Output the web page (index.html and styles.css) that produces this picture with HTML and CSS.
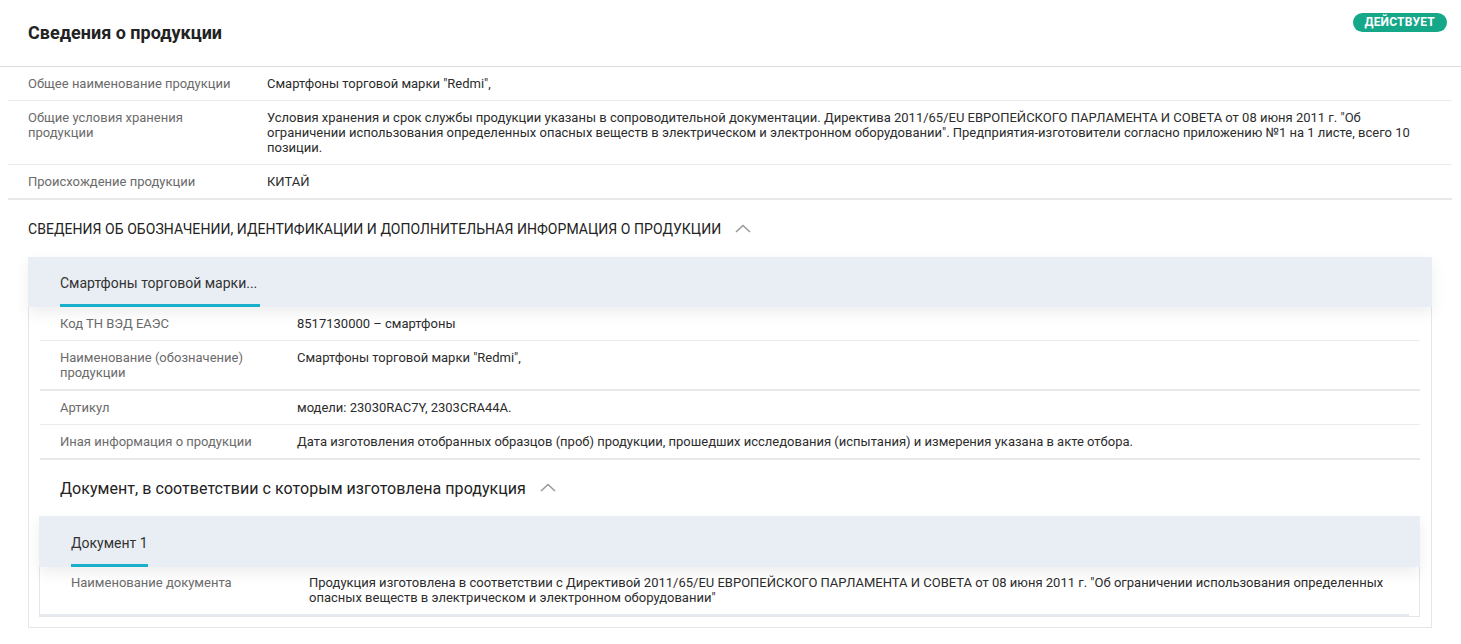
FILE: index.html
```html
<!DOCTYPE html>
<html lang="ru">
<head>
<meta charset="utf-8">
<title>Сведения о продукции</title>
<link rel="stylesheet" href="styles.css">
</head>
<body>
<div class="page">
  <header class="head">
    <h1 class="title">Сведения о продукции</h1>
    <span class="badge">ДЕЙСТВУЕТ</span>
  </header>

  <div class="rows">
    <div class="row">
      <div class="label">Общее наименование продукции</div>
      <div class="value">Смартфоны торговой марки "Redmi",</div>
    </div>
    <div class="row">
      <div class="label">Общие условия хранения продукции</div>
      <div class="value">Условия хранения и срок службы продукции указаны в сопроводительной документации. Директива 2011/65/EU ЕВРОПЕЙСКОГО ПАРЛАМЕНТА И СОВЕТА от 08 июня 2011 г. "Об ограничении использования определенных опасных веществ в электрическом и электронном оборудовании". Предприятия-изготовители согласно приложению №1 на 1 листе, всего 10 позиции.</div>
    </div>
    <div class="row row-last">
      <div class="label">Происхождение продукции</div>
      <div class="value">КИТАЙ</div>
    </div>
  </div>

  <div class="section-head">
    <span>СВЕДЕНИЯ ОБ ОБОЗНАЧЕНИИ, ИДЕНТИФИКАЦИИ И ДОПОЛНИТЕЛЬНАЯ ИНФОРМАЦИЯ О ПРОДУКЦИИ</span>
    <svg class="chev" width="16" height="9" viewBox="0 0 16 9"><polyline points="1,8 8,1.5 15,8" fill="none" stroke="#9a9a9a" stroke-width="1.6"/></svg>
  </div>

  <div class="card">
    <div class="tabs">
      <div class="tab">Смартфоны торговой марки...</div>
    </div>
    <div class="card-body">
      <div class="irow">
        <div class="label">Код ТН ВЭД ЕАЭС</div>
        <div class="value">8517130000 – смартфоны</div>
      </div>
      <div class="irow irow-thick">
        <div class="label">Наименование (обозначение) продукции</div>
        <div class="value">Смартфоны торговой марки "Redmi",</div>
      </div>
      <div class="irow">
        <div class="label">Артикул</div>
        <div class="value">модели: 23030RAC7Y, 2303CRA44A.</div>
      </div>
      <div class="irow irow-thick">
        <div class="label">Иная информация о продукции</div>
        <div class="value">Дата изготовления отобранных образцов (проб) продукции, прошедших исследования (испытания) и измерения указана в акте отбора.</div>
      </div>

      <div class="doc-head">
        <span>Документ, в соответствии с которым изготовлена продукция</span>
        <svg class="chev" width="16" height="9" viewBox="0 0 16 9"><polyline points="1,8 8,1.5 15,8" fill="none" stroke="#9a9a9a" stroke-width="1.6"/></svg>
      </div>

      <div class="doc-card">
        <div class="tabs doc-tabs">
          <div class="tab doc-tab">Документ 1</div>
        </div>
        <div class="doc-body">
          <div class="drow">
            <div class="label">Наименование документа</div>
            <div class="value">Продукция изготовлена в соответствии с Директивой 2011/65/EU ЕВРОПЕЙСКОГО ПАРЛАМЕНТА И СОВЕТА от 08 июня 2011 г. "Об ограничении использования определенных опасных веществ в электрическом и электронном оборудовании"</div>
          </div>
        </div>
      </div>
    </div>
  </div>
</div>
</body>
</html>
```

FILE: styles.css
```css
* { box-sizing: border-box; }

html, body {
  margin: 0;
  padding: 0;
  background: #ffffff;
  font-family: Roboto, "Noto Sans", "Liberation Sans", sans-serif;
  color: #333333;
}

.page {
  width: 1461px;
}

.head {
  height: 67px;
  border-bottom: 1px solid #dcdcdc;
  display: flex;
  align-items: flex-start;
  justify-content: space-between;
  padding: 0 14px 0 28px;
}

.title {
  margin: 0;
  padding-top: 22px;
  font-size: 18px;
  line-height: 22px;
  font-weight: 700;
  color: #222222;
}

.badge {
  margin-top: 13px;
  height: 19px;
  padding: 0 12px;
  border-radius: 10px;
  background: #14a889;
  color: #ffffff;
  font-size: 12px;
  font-weight: 700;
  line-height: 19px;
  letter-spacing: 0.2px;
}

.rows {
  margin: 0 9px 0 8px;
}

.row {
  display: grid;
  grid-template-columns: 239px 1fr;
  padding: 9px 20px 9px 20px;
  border-bottom: 1px solid #ebebeb;
  font-size: 13px;
  line-height: 15px;
}

.row-last {
  border-bottom: 2px solid #e8e8e8;
}

.label {
  color: #6b6b6b;
  padding-right: 16px;
}

.value {
  color: #2c2c2c;
}

.section-head {
  height: 57px;
  padding: 1px 0 0 28px;
  display: flex;
  align-items: center;
  gap: 14px;
  font-size: 14px;
  letter-spacing: 0.05px;
  color: #222222;
}

.chev {
  display: block;
  margin-top: -1px;
}

.card {
  margin: 0 29px 0 28px;
  border: 1px solid #e3e7ec;
  padding-bottom: 10px;
}

.tabs {
  height: 50px;
  background: #e9eef4;
  padding-left: 32px;
  display: flex;
  align-items: flex-end;
  box-shadow: 0 6px 14px rgba(0, 0, 0, 0.07);
  position: relative;
  z-index: 1;
  margin: -1px -1px 0 -1px;
}

.tab {
  font-size: 14px;
  color: #333333;
  line-height: 16px;
  padding: 0 0 13px 0;
  width: 200px;
  border-bottom: 3px solid #1ab0cc;
}

.card-body {
  padding: 0 11px;
}

.irow {
  display: grid;
  grid-template-columns: 237px 1fr;
  padding: 9px 20px 9px 20px;
  border-bottom: 1px solid #ebebeb;
  font-size: 13px;
  line-height: 15px;
}

.irow-thick {
  border-bottom: 2px solid #e8e8e8;
}

.doc-head {
  height: 56px;
  display: flex;
  align-items: center;
  gap: 14px;
  padding-left: 20px;
  font-size: 16px;
  letter-spacing: 0.05px;
  color: #222222;
}

.doc-card {
  margin: 0 0 0 -1px;
  border: 1px solid #e3e7ec;
}

.doc-tabs {
  height: 51px;
  padding-left: 32px;
  margin: -1px -1px 0 -1px;
}

.doc-tab {
  width: 77px;
}

.doc-body {
  padding: 0 10px 0 0;
}

.drow {
  display: grid;
  grid-template-columns: 238px 1fr;
  padding: 8px 20px 9px 31px;
  border-bottom: 2px solid #e6e9ee;
  font-size: 13px;
  line-height: 15px;
}
```
